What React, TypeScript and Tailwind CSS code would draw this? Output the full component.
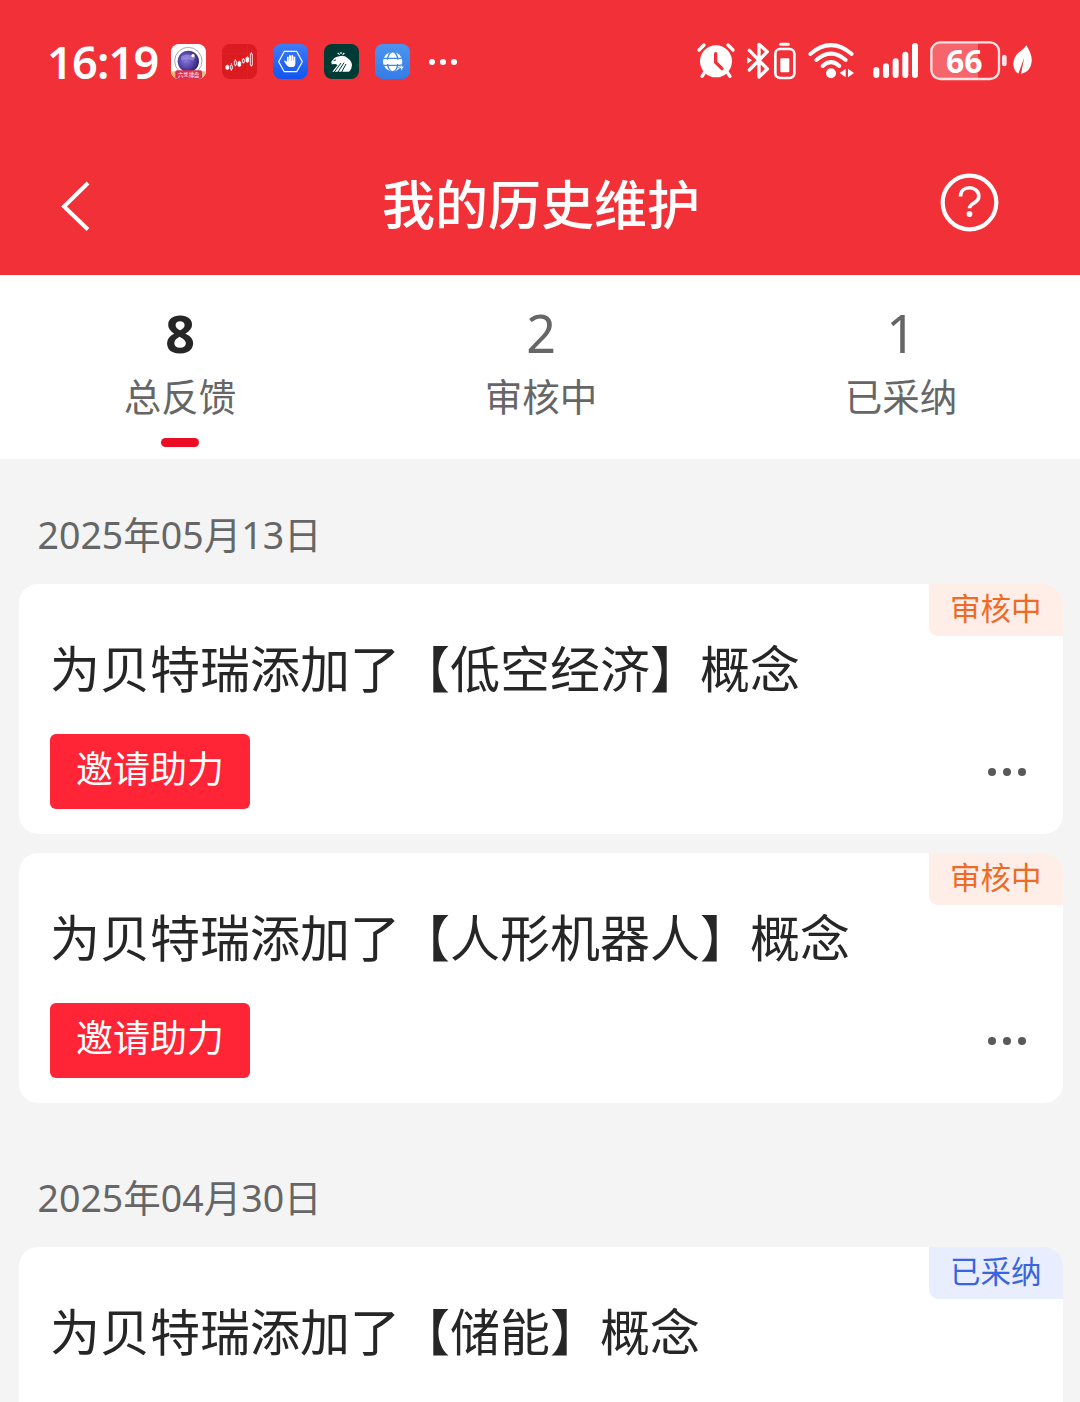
type Status = "pending" | "adopted";

type Entry = {
  concept: string;
  status: Status;
};

const stats = [
  { value: 8, label: "总反馈", active: true },
  { value: 2, label: "审核中", active: false },
  { value: 1, label: "已采纳", active: false },
];

const groups: { date: string; entries: Entry[] }[] = [
  {
    date: "2025年05月13日",
    entries: [
      { concept: "低空经济", status: "pending" },
      { concept: "人形机器人", status: "pending" },
    ],
  },
  {
    date: "2025年04月30日",
    entries: [{ concept: "储能", status: "adopted" }],
  },
];

function CameraApp() {
  return (
    <svg width="35" height="35" viewBox="0 0 105 105">
      <defs>
        <clipPath id="cam">
          <rect width="105" height="105" rx="24" />
        </clipPath>
        <radialGradient id="lens" cx="0.4" cy="0.45" r="0.6">
          <stop offset="0" stopColor="#8b7bd8" />
          <stop offset="0.55" stopColor="#5b49b0" />
          <stop offset="1" stopColor="#2c2468" />
        </radialGradient>
        <linearGradient id="camBase">
          <stop offset="0" stopColor="#f3c94e" />
          <stop offset="0.3" stopColor="#f08cae" />
          <stop offset="0.7" stopColor="#d06bd0" />
          <stop offset="1" stopColor="#e8d070" />
        </linearGradient>
      </defs>
      <g clipPath="url(#cam)">
        <rect width="105" height="105" fill="#fff" />
        <circle cx="52" cy="51" r="41" fill="none" stroke="#a9a9b4" strokeWidth="3" />
        <circle cx="52" cy="52" r="32" fill="url(#lens)" />
        <path d="M30 38q20-14 44 2l-8 10q-16-8-34 0z" fill="#a99be8" opacity="0.6" />
        <circle cx="66" cy="35" r="5" fill="#fff" />
        <rect y="82" width="105" height="23" fill="url(#camBase)" />
        <rect x="13" y="79" width="80" height="26" rx="5" fill="#dc3050" />
        <text x="53" y="98" textAnchor="middle" fontSize="16" fill="#fff" fontFamily="Noto Sans CJK SC, sans-serif">
          六爻排盘
        </text>
      </g>
    </svg>
  );
}

function StockApp() {
  return (
    <svg width="35" height="35" viewBox="0 0 105 105">
      <rect width="105" height="105" rx="24" fill="#da1b20" />
      <path d="M0 29h105M76 0v105" stroke="#e02a2e" strokeWidth="2" />
      <g stroke="#fff" strokeWidth="2.5">
        <path d="M16 62v16M28 57v24M40 45v22M52 50v19M64 42v16M76 37v20M88 24v44" />
        <path d="M12 65h8v10h-8zM48 54h8v12h-8zM72 41h8v12h-8z" fill="#fff" />
        <path d="M25 65h6v10h-6zM37 51h6v12h-6zM61 46h6v10h-6zM85 30h6v34h-6z" fill="#da1b20" />
      </g>
    </svg>
  );
}

function BlockerApp() {
  return (
    <svg width="35" height="35" viewBox="0 0 105 105">
      <defs>
        <linearGradient id="blocker" x2="0" y2="1">
          <stop offset="0" stopColor="#3f7cf8" />
          <stop offset="1" stopColor="#1155ee" />
        </linearGradient>
      </defs>
      <rect width="105" height="105" rx="24" fill="url(#blocker)" />
      <path d="M34 22h37l17 31-17 30H34L17 53z" fill="none" stroke="#fff" strokeWidth="3.5" strokeLinejoin="round" />
      <path
        d="M42 54V39q3-3 5 0v11h1V35q3-4 6 0v15h1V34q3-3 6 1v16h1V39q3-3 5 0v20q0 10-11 10h-6q-5 0-9-6l-8-11q2-4 6-1z"
        fill="#fff"
      />
    </svg>
  );
}

function LionApp() {
  return (
    <svg width="35" height="35" viewBox="0 0 105 105">
      <rect width="105" height="105" rx="24" fill="#003a35" />
      <path
        d="M22 53l9-11q8-5 18-6 14-3 24 8 10 7 11 19 0 12-9 20H25l16-20-7-3-11 1z"
        fill="#fff"
      />
      <path d="M31 84l20-27M42 84l18-28M53 84l13-24M29 49l7-1" stroke="#003a35" strokeWidth="3" fill="none" />
      <path d="M41 27l6 5M51 24v6M61 27l-5 5" stroke="#fff" strokeWidth="3.5" />
    </svg>
  );
}

function GlobeApp() {
  return (
    <svg width="35" height="35" viewBox="0 0 105 105">
      <defs>
        <linearGradient id="globe" x2="0" y2="1">
          <stop offset="0" stopColor="#4d93ee" />
          <stop offset="1" stopColor="#347de8" />
        </linearGradient>
      </defs>
      <rect width="105" height="105" rx="24" fill="url(#globe)" />
      <circle cx="53" cy="53" r="29" fill="#fff" />
      <g fill="none" stroke="#3f88eb" strokeWidth="4">
        <ellipse cx="53" cy="53" rx="16" ry="30" />
        <path d="M22 43h62M22 64h62" />
      </g>
      <path d="M26 47h54v13H26z" fill="#fff" />
      <path d="M78 60l3 7 7 1-5 5-3 8-3-8-8-2 7-3z" fill="#fff" stroke="#3f88eb" strokeWidth="1.5" />
    </svg>
  );
}

function AlarmIcon() {
  return (
    <svg width="43" height="64" viewBox="30 0 129 192">
      <g stroke="#fff" strokeWidth="10" strokeLinecap="round">
        <path d="M42 60l15-15M144 60l-15-15M60 126l-9 13M126 126l9 13" />
      </g>
      <circle cx="93" cy="94" r="48" fill="#fff" />
      <path d="M92 71v26l19 19" fill="none" stroke="#f23038" strokeWidth="10" strokeLinecap="round" strokeLinejoin="round" />
    </svg>
  );
}

function BluetoothIcon() {
  return (
    <svg width="54" height="64" viewBox="180 0 162 192" fill="none" stroke="#fff">
      <path d="M193 61l54 56-25 24V43l25 22-54 55" strokeWidth="10" strokeLinejoin="round" strokeLinecap="round" />
      <path d="M187 81l14 10-14 10z" fill="#fff" stroke="none" />
      <path d="M287 43h23" strokeWidth="9" strokeLinecap="round" />
      <rect x="271" y="57" width="57" height="87" rx="14" strokeWidth="8" />
      <rect x="286" y="85" width="27" height="42" rx="3" fill="#fff" stroke="none" />
    </svg>
  );
}

function WifiIcon() {
  return (
    <svg width="50" height="64" viewBox="360 0 150 192">
      <g fill="none" stroke="#fff" strokeWidth="12" strokeLinecap="round">
        <path d="M376 72q62-53 124 0" />
        <path d="M394 90q44-38 88 0" />
        <path d="M413 108q25-23 50 0" />
      </g>
      <circle cx="438" cy="130" r="15" fill="#fff" />
      <path d="M482 116v26l-18-13zM489 116v26l18-13z" fill="#fff" />
    </svg>
  );
}

function SignalIcon() {
  return (
    <svg width="50" height="64" viewBox="30 0 150 192" stroke="#fff" strokeWidth="18" strokeLinecap="round">
      <path d="M49 120v15M78 109v26M107 94v41M136 74v61M165 48v87" />
    </svg>
  );
}

function BatteryIcon() {
  return (
    <svg width="81" height="64" viewBox="204 0 243 192">
      <rect x="216" y="39" width="138" height="106" rx="16" fill="#f6656b" />
      <rect x="332" y="39" width="22" height="106" fill="#f6656b" />
      <rect x="214" y="37" width="203" height="110" rx="27" fill="none" stroke="#ffe2e3" strokeWidth="7" />
      <rect x="426" y="74" width="14" height="35" rx="7" fill="#ffe2e3" />
      <text x="313" y="129" textAnchor="middle" fontSize="96" fontWeight="700" fill="#fff" fontFamily="Open Sans, Noto Sans, sans-serif">
        66
      </text>
    </svg>
  );
}

function LeafIcon() {
  return (
    <svg width="22" height="64" viewBox="453 0 66 192">
      <path d="M499 46q18 28 16 49-3 30-32 37l10-50-18 49q-14-8-15-30 2-25 22-38 12-8 17-17z" fill="#fff" />
    </svg>
  );
}

function StatusBar() {
  return (
    <div className="flex h-[123px] items-center justify-between pr-[47px] pl-[47px] text-white">
      <div className="flex h-full items-center">
        <span className="w-[124px] text-[45px] leading-none font-semibold tracking-[-0.8px] whitespace-nowrap">16:19</span>
        <div className="flex gap-4">
          <CameraApp />
          <StockApp />
          <BlockerApp />
          <LionApp />
          <GlobeApp />
        </div>
        <div className="ml-[19px] flex gap-[5px]">
          <i className="size-1.5 rounded-full bg-white" />
          <i className="size-1.5 rounded-full bg-white" />
          <i className="size-1.5 rounded-full bg-white" />
        </div>
      </div>
      <div className="flex items-center">
        <AlarmIcon />
        <div className="ml-[7px]"><BluetoothIcon /></div>
        <div className="ml-1.5"><WifiIcon /></div>
        <div className="ml-[15px]"><SignalIcon /></div>
        <div className="ml-2"><BatteryIcon /></div>
        <div className="ml-0.5"><LeafIcon /></div>
      </div>
    </div>
  );
}

function NavBar() {
  return (
    <div className="flex h-[152px] items-start justify-between pr-[81px] pl-[60px] text-white">
      <button className="mt-[57px]">
        <svg width="32" height="52" viewBox="0 0 32 52" fill="none" stroke="#fff" strokeWidth="4">
          <path d="M28 3L4 26.500l24 23" />
        </svg>
      </button>
      <h1 className="mt-[52px] ml-[51px] text-[53px] leading-[60px] font-medium">我的历史维护</h1>
      <button className="mt-[50px]">
        <svg width="60" height="60" viewBox="0 0 60 60" fill="none" stroke="#fff">
          <circle cx="30.500" cy="29.500" r="26.800" strokeWidth="4.200" />
          <path d="M21.500 23.500c0-5.500 4-8.700 9-8.700s9.300 3.200 9.300 8.400c0 3-1.500 4.700-4.300 6.400-3.200 2-5 2.800-5 5.600" strokeWidth="3.600" />
          <circle cx="30.500" cy="41" r="2.900" fill="#fff" stroke="none" />
        </svg>
      </button>
    </div>
  );
}

function StatTabs() {
  return (
    <div className="grid h-[184px] grid-cols-3 bg-white">
      {stats.map((s) => (
        <button
          key={s.label}
          className={s.active ? "flex flex-col items-center pt-[29px]" : "flex flex-col items-center pt-[29px] pl-[2px]"}
        >
          <span
            className={
              s.active
                ? "text-[52px] leading-[58px] font-bold text-[#262626]"
                : "text-[52px] leading-[58px] text-[#666]"
            }
          >
            {s.value}
          </span>
          <span className="mt-[13px] text-[37.5px] leading-[44px] text-[#666]">{s.label}</span>
          {s.active && <span className="mt-[19px] h-[9px] w-[38px] rounded-full bg-[#eb0c25]" />}
        </button>
      ))}
    </div>
  );
}

function Badge({ status }: { status: Status }) {
  return status === "pending" ? (
    <span className="absolute top-0 right-0 h-[52px] w-[134px] rounded-bl-[9px] bg-[#ffeee8] pl-[21px] text-[30.5px] leading-[48px] text-[#ee6a26]">
      审核中
    </span>
  ) : (
    <span className="absolute top-0 right-0 h-[52px] w-[134px] rounded-bl-[9px] bg-[#e8eefd] pl-[21px] text-[30.5px] leading-[48px] text-[#3964e0]">
      已采纳
    </span>
  );
}

function EntryCard({ entry }: { entry: Entry }) {
  return (
    <article className="relative mb-[19px] h-[250px] overflow-hidden rounded-[19px] bg-white pt-[50px] pr-[37px] pl-[31px]">
      <Badge status={entry.status} />
      <h2 className="text-[50px] leading-[70px] whitespace-nowrap text-[#262626]">
        为贝特瑞添加了【{entry.concept}】概念
      </h2>
      {/* adopted entries need no more votes */}
      {entry.status === "pending" && (
        <div className="mt-[30px] flex items-center justify-between">
          <button className="h-[75px] w-[200px] rounded-md bg-[#ff2436] pb-[5px] text-[37px] leading-[70px] text-white">
            邀请助力
          </button>
          <div className="flex gap-[7px]">
            <i className="size-2 rounded-full bg-[#595959]" />
            <i className="size-2 rounded-full bg-[#595959]" />
            <i className="size-2 rounded-full bg-[#595959]" />
          </div>
        </div>
      )}
    </article>
  );
}

export default function App() {
  return (
    <main className="h-[1402px] w-[1080px] overflow-hidden bg-[#f4f4f4] font-['Noto_Sans','Noto_Sans_CJK_SC',sans-serif]">
      <header className="bg-[#f23038]">
        <StatusBar />
        <NavBar />
      </header>

      <StatTabs />

      {groups.map((group) => (
        <section key={group.date} className="pr-[17px] pl-[19px]">
          <div className="h-[125px] pt-[51px] pl-[18.5px] text-[37.5px] leading-[50px] text-[#666]">
            {group.date}
          </div>
          {group.entries.map((entry) => (
            <EntryCard key={entry.concept} entry={entry} />
          ))}
        </section>
      ))}
    </main>
  );
}
